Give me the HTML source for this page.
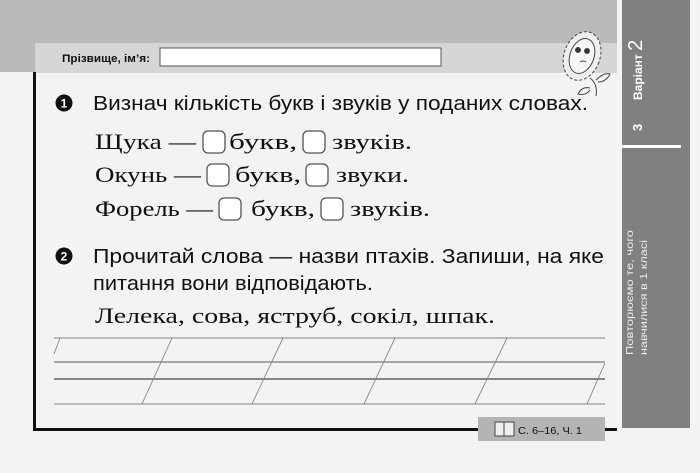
<!DOCTYPE html>
<html><head><meta charset="utf-8"><style>
html,body{margin:0;padding:0;width:700px;height:473px;overflow:hidden;background:#f3f3f3}
svg{display:block}
.s{font-family:"Liberation Sans",sans-serif;fill:#111}
.r{font-family:"Liberation Serif",serif;fill:#111}
</style></head><body>
<svg width="700" height="473" viewBox="0 0 700 473" xmlns="http://www.w3.org/2000/svg">
<rect x="0" y="0" width="700" height="473" fill="#f3f3f3"/>
<rect x="0" y="0" width="617" height="72" fill="#bababa"/>
<rect x="35" y="43" width="582" height="30" fill="#d6d6d6"/>
<rect x="617" y="0" width="83" height="473" fill="#f3f3f3"/>
<rect x="622" y="0" width="68" height="428" fill="#808083"/>
<rect x="622" y="145" width="59" height="3" fill="#fff"/>
<text class="s" x="62" y="62" font-size="11" font-weight="bold" textLength="88" lengthAdjust="spacingAndGlyphs" fill="#222">Прізвище, ім’я:</text>
<rect x="160" y="48" width="281" height="18" fill="#fff" stroke="#555" stroke-width="1"/>
<g fill="none" stroke="#444" stroke-width="1">
<ellipse cx="582" cy="56" rx="18" ry="25" transform="rotate(20 582 56)" fill="#eee" stroke-dasharray="3 2"/>
<ellipse cx="582" cy="56" rx="12" ry="18" transform="rotate(20 582 56)" fill="#f6f6f6"/>
<circle cx="578" cy="50" r="2.5" fill="#333"/><circle cx="587" cy="51" r="2.5" fill="#333"/>
<path d="M580 62 q3 -2 6 0"/>
<path d="M590 78 q8 6 6 18 M596 80 q8 -8 14 -6 q-4 8 -12 8 M590 88 q-8 -2 -12 6 q8 2 12 -4"/>
</g>
<rect x="33" y="72" width="3" height="359" fill="#111"/>
<rect x="33" y="428" width="445" height="3" fill="#111"/>
<rect x="605" y="428" width="12" height="3" fill="#111"/>
<rect x="478" y="417" width="127" height="24" fill="#b4b4b4"/>
<path d="M495 422 h9 v14 h-9 z M504 422 h10 v14 h-10 z" fill="#eee" stroke="#444" stroke-width="1"/>
<text class="s" x="518" y="434" font-size="10" textLength="64" lengthAdjust="spacingAndGlyphs" fill="#222">С. 6–16, Ч. 1</text>
<circle cx="64" cy="103" r="8.5" fill="#111"/>
<text x="64" y="107.5" font-family="Liberation Sans" font-weight="bold" font-size="12" fill="#fff" text-anchor="middle">1</text>
<text class="s" x="93" y="110" font-size="20" textLength="495" lengthAdjust="spacingAndGlyphs">Визнач кількість букв і звуків у поданих словах.</text>
<g fill="#fff" stroke="#555" stroke-width="1.3">
<rect x="203" y="131" width="22" height="22" rx="5"/><rect x="303" y="131" width="22" height="22" rx="5"/>
<rect x="207" y="164" width="22" height="22" rx="5"/><rect x="306" y="164" width="22" height="22" rx="5"/>
<rect x="219" y="198" width="22" height="22" rx="5"/><rect x="321" y="198" width="22" height="22" rx="5"/>
</g>
<g font-size="22">
<text class="r" x="95" y="149" font-size="22" textLength="101" lengthAdjust="spacingAndGlyphs">Щука —</text>
<text class="r" x="229" y="149" font-size="22" textLength="68" lengthAdjust="spacingAndGlyphs">букв,</text>
<text class="r" x="332" y="149" font-size="22" textLength="80" lengthAdjust="spacingAndGlyphs">звуків.</text>
<text class="r" x="95" y="182" font-size="22" textLength="106" lengthAdjust="spacingAndGlyphs">Окунь —</text>
<text class="r" x="235" y="182" font-size="22" textLength="66" lengthAdjust="spacingAndGlyphs">букв,</text>
<text class="r" x="336" y="182" font-size="22" textLength="73" lengthAdjust="spacingAndGlyphs">звуки.</text>
<text class="r" x="95" y="216" font-size="22" textLength="118" lengthAdjust="spacingAndGlyphs">Форель —</text>
<text class="r" x="251" y="216" font-size="22" textLength="64" lengthAdjust="spacingAndGlyphs">букв,</text>
<text class="r" x="350" y="216" font-size="22" textLength="80" lengthAdjust="spacingAndGlyphs">звуків.</text>
</g>
<circle cx="64" cy="256" r="8.5" fill="#111"/>
<text x="64" y="260.5" font-family="Liberation Sans" font-weight="bold" font-size="12" fill="#fff" text-anchor="middle">2</text>
<text class="s" x="93" y="263" font-size="20" textLength="511" lengthAdjust="spacingAndGlyphs">Прочитай слова — назви птахів. Запиши, на яке</text>
<text class="s" x="93" y="290" font-size="20" textLength="280" lengthAdjust="spacingAndGlyphs">питання вони відповідають.</text>
<text class="r" x="95" y="323" font-size="22" textLength="400" lengthAdjust="spacingAndGlyphs">Лелека, сова, яструб, сокіл, шпак.</text>
<g stroke="#9a9a9a" stroke-width="1.2">
<line x1="54" y1="338" x2="605" y2="338"/>
<line x1="54" y1="404" x2="605" y2="404"/>
</g>
<line x1="54" y1="362" x2="605" y2="362" stroke="#777" stroke-width="1.3"/>
<line x1="54" y1="379" x2="605" y2="379" stroke="#444" stroke-width="1.3"/>
<g stroke="#888" stroke-width="0.9">
<line x1="60" y1="338" x2="54" y2="354"/>
<line x1="172" y1="338" x2="142" y2="404"/>
<line x1="283" y1="338" x2="252" y2="404"/>
<line x1="395" y1="338" x2="364" y2="404"/>
<line x1="507" y1="338" x2="475" y2="404"/>
<line x1="605" y1="363" x2="587" y2="404"/>
</g>
<g fill="#fff" font-family="Liberation Sans" font-weight="bold">
<text transform="translate(642 100) rotate(-90)" font-size="12">Варіант <tspan font-size="20" font-weight="normal">2</tspan></text>
<text transform="translate(642 131) rotate(-90)" font-size="13">3</text>
</g>
<g fill="#ececec" font-family="Liberation Sans" font-size="10.5">
<text transform="translate(633 355) rotate(-90)" textLength="125" lengthAdjust="spacingAndGlyphs">Повторюємо те, чого</text>
<text transform="translate(647 355) rotate(-90)" textLength="115" lengthAdjust="spacingAndGlyphs">навчилися в 1 класі</text>
</g>
</svg>
</body></html>
